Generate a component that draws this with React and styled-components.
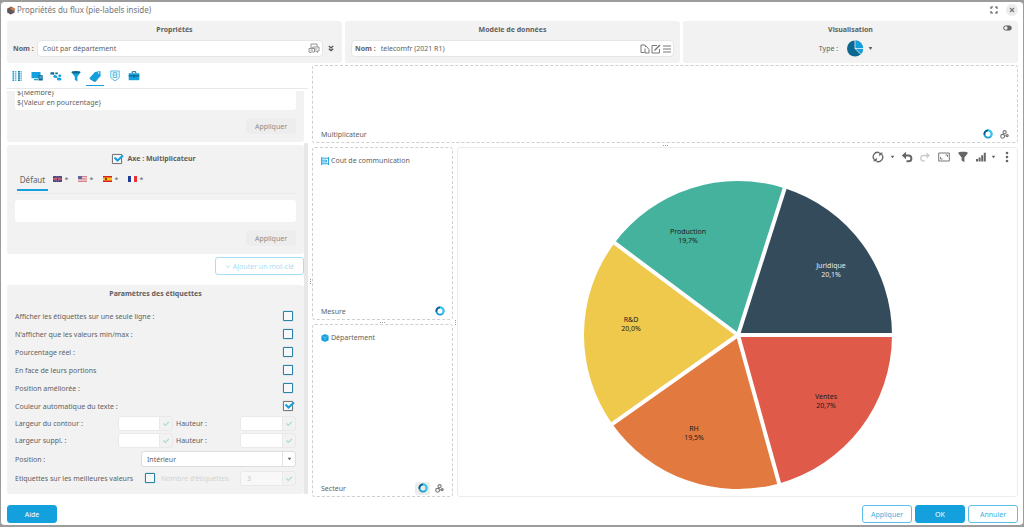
import React, { useState } from 'react'
import styled, { createGlobalStyle } from 'styled-components'

const BLUE = '#14a0dc'
const DARK = '#0b6891'

const GlobalStyle = createGlobalStyle`
    * { box-sizing: border-box; }
    body {
        margin: 0;
        background: #9c9c9c;
        font-family: "Noto Sans", "Open Sans", sans-serif;
        font-size: 7px;
        line-height: 11px;
        color: #5f5f5f;
    }
    button, input, select, textarea { font: inherit; color: inherit; }
    svg { display: block; }
`

const Dialog = styled.div`
    height: 100vh;
    min-height: 500px;
    display: flex;
    flex-direction: column;
    border: solid #9c9c9c;
    border-width: 2px 1px;
    border-radius: 5px;
    background: #fff;
    padding: 0 5px 0 6px;
`
const TitleBar = styled.header`
    display: flex;
    align-items: center;
    height: 19px;
    padding: 0 0 3px;
    gap: 2px;
`
const Title = styled.h1`
    flex: 1;
    margin: 0;
    font-size: 8px;
    line-height: 12px;
    font-weight: 400;
    color: #757575;
`
const IconButton = styled.button`
    display: flex;
    align-items: center;
    justify-content: center;
    width: ${p => p.$w || 14}px;
    height: ${p => p.$h || 14}px;
    padding: 0;
    border: none;
    border-radius: ${p => p.$round ? '50%' : '3px'};
    background: ${p => p.$filled ? '#ececec' : 'none'};
    cursor: pointer;
`
const WindowButtons = styled.div`
    display: flex;
    gap: 6px;
`
const Headers = styled.div`
    display: grid;
    grid-template-columns: repeat(3, 1fr);
    gap: 3px;
`
const HeaderCard = styled.section`
    height: 42px;
    padding: 0 6px;
    border-radius: 3px;
    background: #f2f2f2;
`
const HeaderTop = styled.div`
    display: grid;
    grid-template-columns: 1fr auto 1fr;
    justify-items: end;
    height: 17px;
    margin-bottom: 2px;
`
const Heading = styled.h2`
    margin: 0;
    font-size: 7px;
    line-height: 17px;
    font-weight: 700;
    text-align: center;
    grid-column: ${p => p.$middle ? 2 : 'auto'};
`
const HeaderRow = styled.div`
    display: flex;
    align-items: center;
    justify-content: ${p => p.$center ? 'center' : 'flex-start'};
    height: 17px;
    padding-right: ${p => p.$center ? 10 : 0}px;
    gap: ${p => p.$center ? 6 : 3}px;
`
const Field = styled.div`
    flex: 1;
    display: flex;
    align-items: center;
    height: 17px;
    padding: 0 1px 0 3px;
    border: 1px solid #e6e6e6;
    border-radius: 4px;
    background: #fff;
`
const FieldInput = styled.input`
    flex: 1;
    min-width: 0;
    padding: 0 2px;
    border: none;
    outline: none;
    background: none;
`
const BoldLabel = styled.label`
    font-weight: 700;
    white-space: nowrap;
    padding-right: ${p => p.$pad || 0}px;
`
const Main = styled.main`
    flex: 1;
    min-height: 0;
    display: grid;
    grid-template-columns: 301px 4px minmax(0, 1fr);
    margin-top: 2px;
`
const Left = styled.aside`
    display: flex;
    flex-direction: column;
    min-height: 0;
    padding-bottom: 3px;
`
const Tabs = styled.nav`
    height: 24px;
    margin-bottom: 2px;
    border-bottom: 1px solid #e8e8e8;
`
const TabList = styled.div`
    display: flex;
    justify-content: space-between;
    width: 136px;
    padding-left: 1px;
`
const Tab = styled.button`
    display: flex;
    align-items: center;
    justify-content: center;
    width: 18px;
    height: 21px;
    padding: 1px 0 0;
    border: solid ${p => p.$active ? BLUE : 'transparent'};
    border-width: 0 0 1px;
    background: none;
    cursor: pointer;
`
const Scroller = styled.div`
    flex: 1;
    min-height: 0;
    display: flex;
`
const Cards = styled.div`
    flex: 1;
    min-width: 0;
    display: flex;
    flex-direction: column;
    justify-content: flex-end;
    overflow: hidden;
`
const Track = styled.div`
    width: 4px;
    display: flex;
    align-items: flex-end;
`
const Thumb = styled.div`
    width: 4px;
    height: 87%;
    border-radius: 1px;
    background: #e7e7e7;
`
const Card = styled.section`
    flex: none;
    display: flex;
    flex-direction: column;
    padding: ${p => p.$settings ? '0 8px 7px' : '6px 8px 8px'};
    margin-bottom: ${p => p.$settings ? 0 : 3}px;
    border-radius: 3px;
    background: #f2f2f2;
`
const CardTitle = styled.label`
    display: flex;
    align-items: center;
    justify-content: center;
    gap: 5px;
    height: 15px;
    padding-right: 3px;
    font-weight: 700;
`
const TextArea = styled.textarea`
    display: block;
    width: 100%;
    height: ${p => p.$h}px;
    margin-bottom: 8px;
    padding: 1px 2px 0;
    line-height: 10px;
    border: none;
    border-radius: 3px;
    outline: none;
    resize: none;
    overflow: hidden;
    background: #fff;
`
const Button = styled.button`
    align-self: flex-end;
    flex: none;
    min-width: 50px;
    height: ${p => p.$flat ? 16 : 18}px;
    padding: 0 ${p => p.$wide ? 9 : 6}px;
    border: 1px solid ${p => p.$flat ? '#ededed' : p.$faded ? '#a9def5' : p.$primary ? BLUE : '#5cbfe8'};
    border-radius: 3px;
    background: ${p => p.$flat ? '#ededed' : p.$primary ? BLUE : '#fff'};
    color: ${p => p.$flat ? '#8c8c8c' : p.$primary ? '#fff' : p.$faded ? '#a9def5' : '#3cb0e0'};
    white-space: nowrap;
    cursor: pointer;
`
const KeywordRow = styled.div`
    flex: none;
    display: flex;
    justify-content: flex-end;
    margin: 0 0 10px;
`
const KeywordLabel = styled.span`
    display: flex;
    align-items: center;
    gap: 2px;
`
const LangTabs = styled.div`
    display: flex;
    height: 28px;
    padding: 1px 2px 0;
    margin-bottom: 6px;
    border-bottom: 1px solid #eaeaea;
`
const LangTab = styled.button`
    display: flex;
    align-items: center;
    justify-content: center;
    gap: 3px;
    height: 24px;
    width: ${p => p.$active ? 31 : 25}px;
    padding: ${p => p.$active ? 3 : 2}px 0 0;
    font-size: ${p => p.$active ? 8 : 7}px;
    border: solid ${p => p.$active ? BLUE : 'transparent'};
    border-width: 0 0 2px;
    background: none;
    cursor: pointer;
`
const CheckWrap = styled.span`
    position: relative;
    display: inline-flex;
    flex: none;
    width: 10px;
    height: 10px;
    svg {
        position: absolute;
        left: 1px;
        top: 0;
        pointer-events: none;
    }
`
const CheckInput = styled.input`
    appearance: none;
    width: 10px;
    height: 10px;
    margin: 0;
    border: 1px solid ${p => p.checked ? '#777' : '#2c83a8'};
    box-shadow: 0 0 1px ${p => p.checked ? '#777' : '#2c83a8'};
    border-radius: 1px;
    background: #f7f7f7;
    cursor: pointer;
`
const SettingsTitle = styled(Heading)`
    margin-bottom: 5px;
`
const Option = styled.label`
    display: flex;
    align-items: center;
    justify-content: space-between;
    height: 18px;
    padding-right: 3px;
`
const Sizes = styled.div`
    display: grid;
    grid-template-columns: 103px 55px 1fr 56px;
    align-items: center;
    height: 17px;
`
const SizeLabel = styled.label`
    padding-left: ${p => p.$second ? 3 : 0}px;
`
const NumberBox = styled.span`
    display: flex;
    height: 15px;
    border: 1px solid #e9e9e9;
    border-radius: 3px;
    overflow: hidden;
`
const NumberInput = styled.input`
    flex: 1;
    min-width: 0;
    padding: 0 6px;
    border: none;
    border-right: 1px solid #e9e9e9;
    outline: none;
    background: ${p => p.disabled ? '#f8f8f8' : '#fff'};
    color: #c4c4c4;
`
const PositionRow = styled.div`
    display: flex;
    align-items: center;
    justify-content: space-between;
    height: 20px;
`
const SelectBox = styled.span`
    position: relative;
    width: 155px;
    svg {
        position: absolute;
        right: 4px;
        top: 6px;
        pointer-events: none;
    }
`
const Select = styled.select`
    appearance: none;
    display: block;
    width: 100%;
    height: 16px;
    padding: 0 5px;
    border: 1px solid #ddd;
    border-radius: 3px;
    background: linear-gradient(to left, transparent 12px, #e2e2e2 12px, #e2e2e2 13px, transparent 13px) #fff;
`
const BestRow = styled.div`
    display: flex;
    align-items: center;
    height: 18px;
    gap: 6px;
    label:first-child { width: 124px; }
    ${NumberBox} { width: 56px; margin-left: auto; }
`
const Faded = styled.label`
    color: #d2d2d2;
`
const Right = styled.div`
    display: flex;
    flex-direction: column;
    min-width: 0;
    min-height: 0;
`
const Handle = styled.div`
    flex: none;
    display: flex;
    flex-direction: ${p => p.$row ? 'row' : 'column'};
    align-items: center;
    justify-content: center;
    gap: 1px;
    min-width: 4px;
    min-height: 4px;
    i {
        width: 1px;
        height: 1px;
        background: #9a9a9a;
    }
`
const Workspace = styled.div`
    flex: 1;
    min-height: 0;
    display: flex;
`
const DropColumn = styled.div`
    flex: none;
    width: 141px;
    display: flex;
    flex-direction: column;
`
const DropZone = styled.section`
    flex: ${p => p.$top ? '0 0 78px' : '1'};
    display: flex;
    flex-direction: column;
    justify-content: space-between;
    padding: 7px ${p => p.$top ? 5 : 5}px 1px 8px;
    border: 1px dashed #cfcfcf;
    border-radius: 3px;
`
const DropItem = styled.div`
    display: flex;
    align-items: center;
    gap: 2px;
    height: 11px;
`
const DropFoot = styled.footer`
    display: flex;
    align-items: center;
    gap: 2px;
    height: 14px;
    margin-top: auto;
    span { flex: 1; }
`
const ChartPanel = styled.section`
    flex: 1;
    min-width: 0;
    display: flex;
    flex-direction: column;
    border: 1px solid #ececec;
    border-radius: 3px;
`
const Toolbar = styled.div`
    display: flex;
    justify-content: flex-end;
    align-items: center;
    gap: 4px;
    height: 18px;
    padding-right: 4px;
`
const ToolGroup = styled.div`
    display: flex;
    gap: ${p => p.$gap || 1}px;
`
const PieBox = styled.div`
    flex: 1;
    min-height: 0;
    padding: 15px 0 7px 1px;
    svg {
        width: 100%;
        height: 100%;
    }
`
const Footer = styled.footer`
    display: flex;
    gap: 3px;
    padding: 8px 0 2px;
`
const Spacer = styled.span`
    flex: 1;
`

const Caret = () => (
    <svg width="5" height="4" viewBox="0 0 5 4"><path d="M.6.8h3.8L2.5 3.3z" fill="#666" /></svg>
)
const Ring = () => (
    <svg width="10" height="10" viewBox="0 0 10 10" fill="none" strokeWidth="1.8">
        <circle cx="5" cy="5" r="3.6" stroke="#1b9bd4" />
        <path d="M5 1.4A3.6 3.6 0 0 1 7.5 7.6" stroke="#35c8ee" />
        <path d="M1.5 5.8A3.6 3.6 0 0 1 5 1.4" stroke="#0b5f8d" />
    </svg>
)
const Nodes = () => (
    <svg width="9" height="9" viewBox="0 0 9 9" fill="none" stroke="#777" strokeWidth="1.1">
        <circle cx="4.6" cy="2.2" r="1.6" />
        <circle cx="2.6" cy="6.3" r="1.9" />
        <circle cx="7.2" cy="5.6" r="1" />
        <path d="M4.2 3.8 3.6 4.8M4.5 6l1.7-.3" />
    </svg>
)
const Logo = () => (
    <svg width="8" height="9" viewBox="0 0 8 9">
        <path d="M4 .4 7.6 2.5v4L4 8.6.4 6.5v-4z" fill="#6b5a55" />
        <path d="M4 .4 7.6 2.5 6.4 5 3.4 2.8z" fill="#e8702a" />
        <path d="M.4 2.5 4 4.5v4.1L.4 6.5z" fill="#55565e" />
    </svg>
)
const Confirm = () => (
    <svg width="12" height="13" viewBox="0 0 12 13" fill="none" stroke="#a8dcd0" strokeWidth="1.2"><path d="m3.3 6.4 2 2 3.6-3.6" /></svg>
)
const ModelIcon = ({ children }) => (
    <svg width="10" height="10" viewBox="0 0 10 10" fill="none" stroke="#777" strokeWidth="1">{children}</svg>
)

const tabIcons = [
    ['Grille', <g>
        {[1.5, 4.3, 7.1, 9.6].map((x, c) => [0, 1, 2, 3, 4].map(r => (
            <rect key={x + '-' + r} x={x} y={1 + r * 2.1} width={c % 2 ? 1 : 1.7} height="1.6" fill={c === 2 ? DARK : BLUE} />
        )))}
    </g>],
    ['Affichage', <g>
        <path d="M.5 2h9v6.2h-9zM3 9h4v1.2H3z" fill={BLUE} />
        <path d="M7.5 5.2h4.2v5.3H7.5z" fill={DARK} />
        <path d="M8.3 6h2.6v2.8H8.3z" fill="#4b9fc4" />
    </g>],
    ['Relations', <g>
        <path d="M.5 2.2h3.7v2.3H.5zM5.3 2.5h2.5v1.8H5.3z" fill={DARK} />
        <path d="M3.5 4.5 8 8.6" stroke={DARK} strokeWidth=".9" />
        <ellipse cx="5.2" cy="6.6" rx="1.9" ry="1.3" fill={BLUE} />
        <ellipse cx="9.7" cy="5.8" rx="1.5" ry="1.2" fill={BLUE} />
        <ellipse cx="9.2" cy="9" rx="2.3" ry="1.5" fill={BLUE} />
    </g>],
    ['Filtre', <g>
        <path d="M1.5 2.2h9L7.4 6.8v4.8L4.8 9.8v-3z" fill={BLUE} />
        <ellipse cx="6" cy="2.3" rx="4.5" ry="1.3" fill={DARK} />
    </g>],
    ['Étiquettes', <g>
        <path d="M.3 8.2 6 2l5.4-1 .3 5L6 11.8z" fill={BLUE} />
        <path d="m1.2 9 4.8 2.7L8 9.6" stroke={DARK} strokeWidth=".7" fill="none" />
        <circle cx="9.6" cy="3" r=".8" fill="#fff" />
    </g>],
    ['Style', <g fill="none" stroke="#3fb2e2" strokeWidth=".9">
        <path d="M1.8 1h8.4v6.7L6 11 1.8 7.7z" />
        <path d="M4.2 2.7h3.6v4.8H4.2zM4.2 5h3.6" />
    </g>],
    ['Outils', <g>
        <path d="M4.2 3V1.7h3.6V3" fill="none" stroke={DARK} />
        <path d="M.7 3.2h10.6v7H.7z" fill={BLUE} />
        <path d="M.7 5.2h10.6v1.2H.7zM5.1 5h1.8v2.4H5.1z" fill={DARK} />
    </g>],
]

const flags = [
    ['Anglais', <g>
        <path d="M0 0h9v6H0z" fill="#2b3a80" />
        <path d="m0 0 9 6M9 0 0 6" stroke="#a5687f" strokeWidth=".8" />
        <path d="M4.5 0v6M0 3h9" stroke="#d8b4c0" strokeWidth="1.6" />
        <path d="M4.5 0v6M0 3h9" stroke="#c8203c" strokeWidth="1.2" />
    </g>],
    ['Américain', <g>
        <path d="M0 0h9v6H0z" fill="#f3e6e8" />
        <path d="M0 .5h9M0 2.2h9M0 3.9h9M0 5.5h9" stroke="#cf6b78" strokeWidth=".8" />
        <path d="M0 0h4v3H0z" fill="#5a6a9c" />
    </g>],
    ['Espagnol', <g>
        <path d="M0 0h9v6H0z" fill="#d3202c" />
        <path d="M0 1.5h9v3H0z" fill="#fcc60a" />
        <path d="M2 2h2v2H2z" fill="#8c3a12" />
    </g>],
    ['Français', <g>
        <path d="M0 0h3v6H0z" fill="#1f3c9c" />
        <path d="M3 0h3v6H3z" fill="#fff" />
        <path d="M6 0h3v6H6z" fill="#ed2f3c" />
    </g>],
]

const slices = [
    { name: 'Juridique', value: 20.1, color: '#344b5b', text: '#e6e9eb', x: 247, y: 87 },
    { name: 'Production', value: 19.7, color: '#45b29d', text: '#1c1c1c', x: 104, y: 53 },
    { name: 'R&D', value: 20.0, color: '#efc94c', text: '#1c1c1c', x: 47, y: 141 },
    { name: 'RH', value: 19.5, color: '#e27a3f', text: '#1c1c1c', x: 110, y: 250 },
    { name: 'Ventes', value: 20.7, color: '#df5a49', text: '#1c1c1c', x: 242, y: 218 },
]

const R = 154
const point = (share, r = R) => {
    const a = share / 100 * Math.PI * 2
    return `${R + r * Math.cos(a)} ${R - r * Math.sin(a)}`
}

function Pie() {
    let sum = 0
    const parts = slices.map(s => {
        const from = sum
        sum += s.value
        return { ...s, from, to: sum }
    })
    return (
        <svg viewBox="0 0 308 308" role="img" aria-label="Coût par département">
            {parts.map(s => (
                <path key={s.name} fill={s.color} d={`M${R} ${R}L${point(s.from)}A${R} ${R} 0 0 0 ${point(s.to)}Z`} />
            ))}
            {parts.map(s => (
                <path key={s.name} stroke="#fff" strokeWidth="4" d={`M${R} ${R}L${point(s.from, R + 2)}`} />
            ))}
            {parts.map(s => (
                <text key={s.name} fill={s.text} fontSize="7" textAnchor="middle">
                    <tspan x={s.x} y={s.y}>{s.name}</tspan>
                    <tspan x={s.x} y={s.y + 9}>{s.value.toFixed(1).replace('.', ',')}%</tspan>
                </text>
            ))}
        </svg>
    )
}

function Check({ id, checked, onChange, label }) {
    return (
        <CheckWrap>
            <CheckInput type="checkbox" id={id} aria-label={label} checked={checked} onChange={onChange} />
            {checked && (
                <svg width="11" height="9" viewBox="0 0 11 9" fill="none" stroke={BLUE} strokeWidth="2"><path d="m1.5 3.5 3 3L10 1.5" /></svg>
            )}
        </CheckWrap>
    )
}

function Size({ id, label, second }) {
    return (
        <>
            <SizeLabel htmlFor={id} $second={second}>{label}</SizeLabel>
            <NumberBox><NumberInput id={id} /><Confirm /></NumberBox>
        </>
    )
}

const Dots = ({ row }) => <Handle $row={row}><i /><i /><i /></Handle>

const optionLabels = [
    'Afficher les étiquettes sur une seule ligne :',
    "N'afficher que les valeurs min/max :",
    'Pourcentage réel :',
    'En face de leurs portions',
    'Position améliorée :',
    'Couleur automatique du texte :',
]

export default function App() {
    const [tab, setTab] = useState(4)
    const [axis, setAxis] = useState(true)
    const [best, setBest] = useState(false)
    const [options, setOptions] = useState([false, false, false, false, false, true])
    const toggle = i => setOptions(options.map((o, n) => n === i ? !o : o))

    return (
        <>
            <GlobalStyle />
            <Dialog role="dialog">
                <TitleBar>
                    <Logo />
                    <Title>Propriétés du flux (pie-labels inside)</Title>
                    <WindowButtons>
                        <IconButton $w={12} $h={12} aria-label="Agrandir">
                            <svg width="8" height="8" viewBox="0 0 8 8" fill="none" stroke="#555" strokeWidth="1.1"><path d="M1 3V1h2M5 1h2v2M7 5v2H5M3 7H1V5" /></svg>
                        </IconButton>
                        <IconButton $w={12} $h={12} $round $filled aria-label="Fermer">
                            <svg width="6" height="6" viewBox="0 0 6 6" stroke="#777" strokeWidth="1.2"><path d="m1 1 4 4M5 1 1 5" /></svg>
                        </IconButton>
                    </WindowButtons>
                </TitleBar>

                <Headers>
                    <HeaderCard>
                        <HeaderTop><Heading $middle>Propriétés</Heading></HeaderTop>
                        <HeaderRow>
                            <BoldLabel htmlFor="name">Nom :</BoldLabel>
                            <Field>
                                <FieldInput id="name" defaultValue="Coût par département" />
                                <IconButton aria-label="Traduire">
                                    <svg width="12" height="11" viewBox="0 0 12 11" fill="#fff" stroke="#8a8a8a" strokeWidth=".9">
                                        <path d="M3 1h6v4H3z" />
                                        <path d="M5 4h6v4H9.5v1.5L8 8H5z" />
                                        <path d="M1 5.5h5.5V9H3l-1 1V9H1zM2.5 7.2H5M6.5 6h3" />
                                    </svg>
                                </IconButton>
                            </Field>
                            <IconButton $w={10} aria-label="Développer">
                                <svg width="6" height="7" viewBox="0 0 6 7" fill="none" stroke="#555" strokeWidth="1.3"><path d="m.8 1 2.2 1.9L5.2 1M.8 3.7 3 5.6l2.2-1.9" /></svg>
                            </IconButton>
                        </HeaderRow>
                    </HeaderCard>
                    <HeaderCard>
                        <HeaderTop><Heading $middle>Modèle de données</Heading></HeaderTop>
                        <HeaderRow>
                            <Field>
                                <BoldLabel htmlFor="model" $pad={3}>Nom :</BoldLabel>
                                <FieldInput id="model" defaultValue="telecomfr (2021 R1)" />
                                <IconButton $w={11} aria-label="Ouvrir"><ModelIcon><path d="M4.5 8.5H1V1h4l1 1.5M5 4.5V9h4V5.5l-2.5-3H5" /></ModelIcon></IconButton>
                                <IconButton $w={11} aria-label="Modifier"><ModelIcon><path d="M6 1.5H1V9h7.5V5" /><path d="M3.5 6.5 9 1" strokeWidth="1.5" /></ModelIcon></IconButton>
                                <IconButton $w={11} aria-label="Menu"><ModelIcon><path d="M1 2h8M1 5h8M1 8h8" /></ModelIcon></IconButton>
                            </Field>
                        </HeaderRow>
                    </HeaderCard>
                    <HeaderCard>
                        <HeaderTop>
                            <Heading $middle>Visualisation</Heading>
                            <IconButton $w={9} $h={14} aria-label="Mode">
                                <svg width="9" height="6" viewBox="0 0 9 6">
                                    <rect x=".5" y=".8" width="8" height="4.4" rx="2.2" fill="#666" stroke="#666" strokeWidth=".6" />
                                    <circle cx="2.9" cy="3" r="1.7" fill="#f2f2f2" />
                                </svg>
                            </IconButton>
                        </HeaderTop>
                        <HeaderRow $center>
                            <span>Type :</span>
                            <IconButton $w={28} $h={17} aria-label="Type de graphique">
                                <svg width="28" height="17" viewBox="0 0 28 17">
                                    <circle cx="11" cy="8.5" r="8" fill={DARK} />
                                    <path d="M11 8.5V.5a8 8 0 0 1 5.7 13.7z" fill={BLUE} />
                                    <path d="M11 0v8.5h9M11 8.5l6 6" stroke="#f2f2f2" strokeWidth=".8" fill="none" />
                                    <path d="M24.5 7h4l-2 3z" fill="#666" />
                                </svg>
                            </IconButton>
                        </HeaderRow>
                    </HeaderCard>
                </Headers>

                <Main>
                    <Left>
                        <Tabs>
                            <TabList>
                                {tabIcons.map(([name, icon], i) => (
                                    <Tab key={name} $active={tab === i} aria-label={name} onClick={() => setTab(i)}>
                                        <svg width="12" height="12" viewBox="0 0 12 12">{icon}</svg>
                                    </Tab>
                                ))}
                            </TabList>
                        </Tabs>
                        <Scroller>
                            <Cards>
                                <Card>
                                    <TextArea $h={23} aria-label="Format" defaultValue={'${Membre}\n${Valeur en pourcentage}'} />
                                    <Button $flat>Appliquer</Button>
                                </Card>
                                <Card>
                                    <CardTitle>
                                        <Check checked={axis} onChange={() => setAxis(!axis)} />
                                        Axe : Multiplicateur
                                    </CardTitle>
                                    <LangTabs>
                                        <LangTab $active>Défaut</LangTab>
                                        {flags.map(([name, flag]) => (
                                            <LangTab key={name} aria-label={name}>
                                                <svg width="9" height="6" viewBox="0 0 9 6">{flag}</svg>*
                                            </LangTab>
                                        ))}
                                    </LangTabs>
                                    <TextArea $h={22} aria-label="Multiplicateur" />
                                    <Button $flat>Appliquer</Button>
                                </Card>
                                <KeywordRow>
                                    <Button $faded $wide>
                                        <KeywordLabel>
                                            <svg width="6" height="5" viewBox="0 0 6 5" fill="none" stroke="#a9def5"><path d="m1 1.5 2 2 2-2" /></svg>
                                            Ajouter un mot-clé
                                        </KeywordLabel>
                                    </Button>
                                </KeywordRow>
                                <Card $settings>
                                    <SettingsTitle>Paramètres des étiquettes</SettingsTitle>
                                    {optionLabels.map((label, i) => (
                                        <Option key={label}>
                                            {label}
                                            <Check checked={options[i]} onChange={() => toggle(i)} />
                                        </Option>
                                    ))}
                                    <Sizes>
                                        <Size id="ow" label="Largeur du contour :" />
                                        <Size id="oh" label="Hauteur :" second />
                                    </Sizes>
                                    <Sizes>
                                        <Size id="ew" label="Largeur suppl. :" />
                                        <Size id="eh" label="Hauteur :" second />
                                    </Sizes>
                                    <PositionRow>
                                        <label htmlFor="position">Position :</label>
                                        <SelectBox>
                                            <Select id="position"><option>Intérieur</option></Select>
                                            <Caret />
                                        </SelectBox>
                                    </PositionRow>
                                    <BestRow>
                                        <label htmlFor="best">Etiquettes sur les meilleures valeurs</label>
                                        <Check id="best" checked={best} onChange={() => setBest(!best)} />
                                        <Faded htmlFor="count">Nombre d'étiquettes</Faded>
                                        <NumberBox><NumberInput id="count" defaultValue="3" disabled={!best} /><Confirm /></NumberBox>
                                    </BestRow>
                                </Card>
                            </Cards>
                            <Track><Thumb /></Track>
                        </Scroller>
                    </Left>

                    <Dots />

                    <Right>
                        <DropZone $top>
                            <DropFoot>
                                <span>Multiplicateur</span>
                                <IconButton $w={15} aria-label="Couleurs"><Ring /></IconButton>
                                <IconButton $w={15} aria-label="Forme"><Nodes /></IconButton>
                            </DropFoot>
                        </DropZone>
                        <Dots row />
                        <Workspace>
                            <DropColumn>
                                <DropZone>
                                    <DropItem>
                                        <svg width="8" height="8" viewBox="0 0 8 8" fill="none" stroke={BLUE} strokeWidth=".9"><path d="M.6 0v8M7.5 0v8M.6 1.2h6.9M.6 6.8h6.9M.6 3.2h4.8M.6 5h4.8M5.4 3v2.2" /></svg>
                                        Cout de communication
                                    </DropItem>
                                    <DropFoot>
                                        <span>Mesure</span>
                                        <IconButton $w={15} aria-label="Couleurs"><Ring /></IconButton>
                                    </DropFoot>
                                </DropZone>
                                <Dots row />
                                <DropZone>
                                    <DropItem>
                                        <svg width="8" height="8" viewBox="0 0 8 8">
                                            <path d="M4 0 7.6 1.8v4.4L4 8 .4 6.2V1.8z" fill={BLUE} />
                                            <path d="m1.6 2.4 2.4 1.2 2.4-1.2M4 3.6v3" stroke="#a5ddf4" strokeWidth=".5" fill="none" />
                                        </svg>
                                        Département
                                    </DropItem>
                                    <DropFoot>
                                        <span>Secteur</span>
                                        <IconButton $w={15} $h={13} $filled aria-label="Couleurs"><Ring /></IconButton>
                                        <IconButton $w={15} aria-label="Forme"><Nodes /></IconButton>
                                    </DropFoot>
                                </DropZone>
                            </DropColumn>
                            <Dots />
                            <ChartPanel>
                                <Toolbar>
                                    <ToolGroup $gap={3}>
                                        <IconButton aria-label="Actualiser">
                                            <svg width="12" height="12" viewBox="0 0 12 12">
                                                <path d="M7.4 1.7A4.4 4.4 0 0 0 2.6 8.9M4.6 10.3A4.4 4.4 0 0 0 9.4 3.1" fill="none" stroke="#666" strokeWidth="1.3" />
                                                <path d="M.8 10.3h4V6.8zM11.2 1.7h-4v3.5z" fill="#666" />
                                            </svg>
                                        </IconButton>
                                        <IconButton $w={8} aria-label="Options d'actualisation"><Caret /></IconButton>
                                    </ToolGroup>
                                    <IconButton aria-label="Annuler l'action">
                                        <svg width="12" height="12" viewBox="0 0 12 12">
                                            <path d="M5 .8.8 4.5 5 8.2z" fill="#666" />
                                            <path d="M4 4.5h3.5a2.9 2.9 0 0 1 0 5.8h-2" fill="none" stroke="#666" strokeWidth="1.9" />
                                        </svg>
                                    </IconButton>
                                    <IconButton aria-label="Rétablir">
                                        <svg width="12" height="12" viewBox="0 0 12 12">
                                            <path d="m7.5 1.2 3.5 3.3-3.5 3.3z" fill="#ccc" />
                                            <path d="M8 4.5H4.5a2.7 2.7 0 0 0 0 5.4H6" fill="none" stroke="#ccc" strokeWidth="1.4" />
                                        </svg>
                                    </IconButton>
                                    <IconButton $w={16} aria-label="Plein écran">
                                        <svg width="12" height="10" viewBox="0 0 12 10" fill="none" stroke="#777"><path d="M.7 1h10.6v8H.7z" /><path d="M7.5 3h2v1.8M4.5 7h-2V5.2" /></svg>
                                    </IconButton>
                                    <IconButton aria-label="Filtrer">
                                        <svg width="10" height="12" viewBox="0 0 10 12"><path d="M.4 1.5C.4.5 9.6.5 9.6 1.5v1l-3.2 4v4.8L3.6 9.5v-3l-3.2-4z" fill="#666" /></svg>
                                    </IconButton>
                                    <ToolGroup>
                                        <IconButton aria-label="Graphique">
                                            <svg width="10" height="10" viewBox="0 0 10 10" fill="#666"><path d="M0 7h2v2.5H0zM2.6 5.5h2v4h-2zM5.2 3.3h2v6.2h-2zM7.8.7h2v8.8h-2z" /></svg>
                                        </IconButton>
                                        <IconButton $w={8} aria-label="Options du graphique"><Caret /></IconButton>
                                    </ToolGroup>
                                    <IconButton $w={12} aria-label="Plus">
                                        <svg width="4" height="12" viewBox="0 0 4 12" fill="#666"><circle cx="2" cy="2" r="1.3" /><circle cx="2" cy="6" r="1.3" /><circle cx="2" cy="10" r="1.3" /></svg>
                                    </IconButton>
                                </Toolbar>
                                <PieBox><Pie /></PieBox>
                            </ChartPanel>
                        </Workspace>
                    </Right>
                </Main>

                <Footer>
                    <Button $primary>Aide</Button>
                    <Spacer />
                    <Button>Appliquer</Button>
                    <Button $primary>OK</Button>
                    <Button>Annuler</Button>
                </Footer>
            </Dialog>
        </>
    )
}
